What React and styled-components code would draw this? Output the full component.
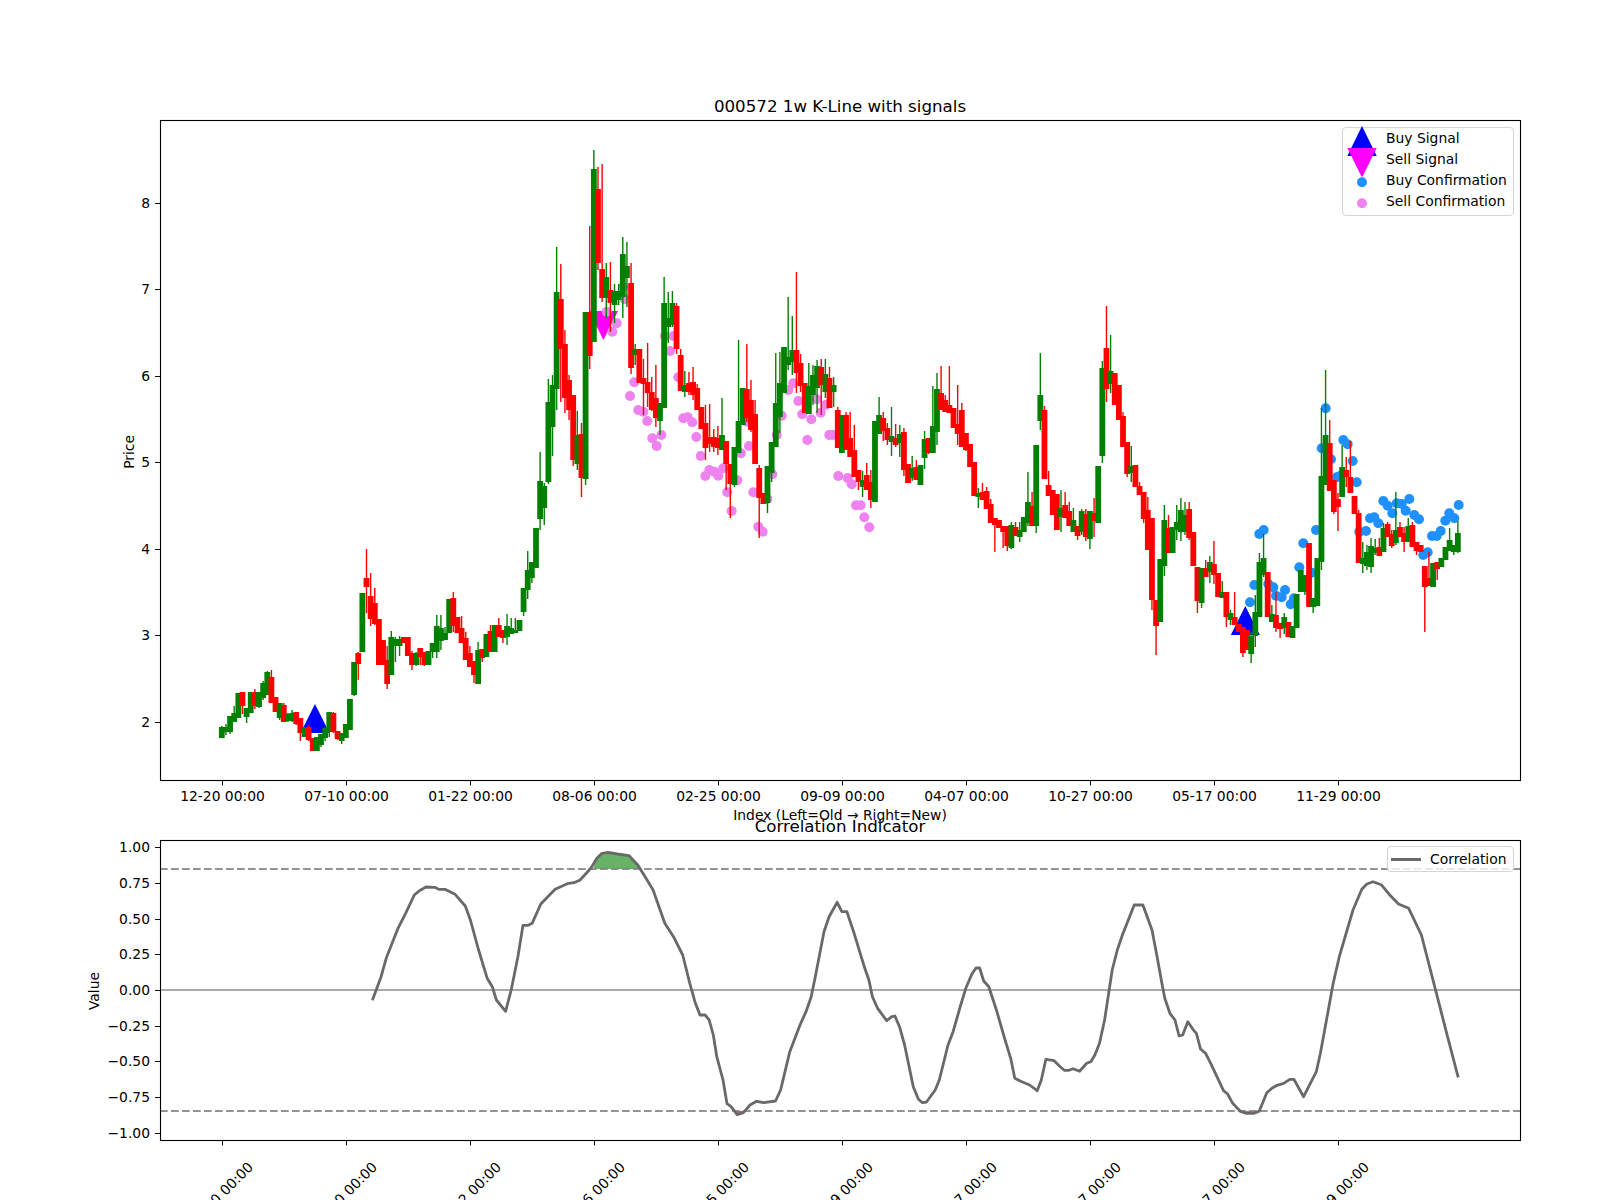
import React from "react";
import styled, { createGlobalStyle } from "styled-components";

// i, colour, body top, body bottom, high, low. y values are figure pixels
const candleRows = `0 g 727 738 726 738
1 g 727 732 724 735
2 g 716 732 716 734
3 g 713 722 706 722
4 g 693 718 693 718
5 r 692 706 692 714
6 g 708 717 708 723
7 g 692 713 692 713
8 r 692 706 689 709
9 g 692 707 692 708
10 g 683 698 681 700
11 g 672 695 671 695
12 r 677 703 670 703
13 r 697 712 697 712
14 g 703 718 703 720
15 r 705 722 703 722
16 g 714 721 713 722
17 g 713 721 710 722
18 r 712 724 712 725
19 r 718 733 718 741
20 g 728 737 727 737
21 r 727 740 725 741
22 r 738 751 738 751
23 g 737 751 737 751
24 g 734 745 734 747
25 g 728 738 727 741
26 g 712 732 712 737
27 r 713 732 712 733
28 r 731 739 731 740
29 g 733 741 733 744
30 g 724 738 724 738
31 g 699 730 699 730
32 g 662 695 662 696
33 r 653 664 652 680
34 g 593 652 593 652
35 r 578 587 549 613
36 r 596 619 573 626
37 r 603 624 588 625
38 r 619 665 619 665
39 r 640 665 640 665
40 r 660 684 646 689
41 g 637 675 631 675
42 g 639 646 637 662
43 g 639 646 636 656
44 r 637 643 637 643
45 r 637 656 637 656
46 r 653 665 651 670
47 g 653 665 652 666
48 r 648 657 648 665
49 r 652 665 652 666
50 g 651 665 651 665
51 g 643 652 643 658
52 g 626 652 615 658
53 g 628 641 615 650
54 g 633 640 627 640
55 g 599 633 599 633
56 r 598 626 592 632
57 r 617 633 617 633
58 r 628 643 616 643
59 r 638 660 632 660
60 r 653 667 646 667
61 r 661 675 661 683
62 g 650 684 642 684
63 r 649 658 649 662
64 g 634 657 634 657
65 r 631 652 625 652
66 g 625 652 625 652
67 r 625 637 618 637
68 r 630 638 630 643
69 g 626 637 614 645
70 g 628 634 618 634
71 g 630 633 618 633
72 g 620 631 620 631
73 g 588 612 588 616
74 g 570 590 551 599
75 g 562 578 562 583
76 g 528 568 528 568
77 g 481 519 452 530
78 g 486 508 483 525
79 g 402 482 379 484
80 g 385 427 375 456
81 g 292 389 247 410
82 r 299 349 264 402
83 r 344 398 330 413
84 r 380 410 375 420
85 r 395 460 395 466
86 g 435 464 411 470
87 r 434 478 423 497
88 g 312 479 312 485
89 r 312 356 226 369
90 g 169 342 150 342
91 r 189 263 167 270
92 r 269 298 164 302
93 g 277 298 263 318
94 r 290 303 262 332
95 g 291 305 284 323
96 g 291 300 284 305
97 g 254 297 237 318
98 g 266 278 242 307
99 r 283 368 263 374
100 g 349 355 344 365
101 r 349 383 349 383
102 r 378 384 359 415
103 r 382 393 343 407
104 r 392 410 377 411
105 r 398 418 365 427
106 g 403 421 403 435
107 g 303 408 277 408
108 g 318 327 292 343
109 g 303 325 291 327
110 r 306 349 303 354
111 r 355 391 349 391
112 g 385 392 371 397
113 r 383 392 372 395
114 r 382 395 367 400
115 r 388 410 384 410
116 r 407 429 407 429
117 r 423 448 405 460
118 r 437 444 404 452
119 r 437 447 429 452
120 r 438 448 426 455
121 g 435 450 398 450
122 r 441 464 441 490
123 r 464 484 464 518
124 g 447 485 447 487
125 g 421 453 340 453
126 g 388 425 388 425
127 r 389 418 344 422
128 r 400 430 380 432
129 r 414 464 400 464
130 r 468 498 465 538
131 r 493 504 493 504
132 g 466 503 466 513
133 g 442 473 442 482
134 g 403 447 353 447
135 g 383 417 352 433
136 g 347 393 347 393
137 g 357 365 297 370
138 g 350 362 316 375
139 r 350 373 272 393
140 r 363 386 354 392
141 r 383 413 383 413
142 g 386 414 363 414
143 g 375 395 365 405
144 g 366 388 360 413
145 r 367 385 359 415
146 g 374 392 359 398
147 r 378 408 367 408
148 g 385 392 377 407
149 r 410 448 407 448
150 g 415 453 415 453
151 r 415 450 412 450
152 r 438 457 412 457
153 r 450 477 425 477
154 r 470 482 470 490
155 g 480 487 471 497
156 r 475 490 463 490
157 r 482 500 470 508
158 g 421 502 421 502
159 g 415 434 397 434
160 r 418 431 412 441
161 r 428 440 423 445
162 g 436 442 407 456
163 r 438 445 424 447
164 g 434 443 425 457
165 r 432 470 428 476
166 r 464 483 464 483
167 g 468 478 456 481
168 r 467 480 460 480
169 g 465 485 465 485
170 g 439 458 431 469
171 r 438 453 438 454
172 g 426 453 386 453
173 g 389 432 373 445
174 r 393 410 366 410
175 r 400 412 395 412
176 r 405 413 366 413
177 r 408 428 408 428
178 r 424 434 385 445
179 r 410 447 403 447
180 r 433 450 433 451
181 r 444 467 444 467
182 r 462 496 462 496
183 g 493 497 488 508
184 r 492 500 483 500
185 r 491 509 487 509
186 r 504 523 499 523
187 r 518 525 518 552
188 r 520 528 520 528
189 r 526 532 526 548
190 r 526 546 526 551
191 g 525 548 522 549
192 r 527 536 522 536
193 g 530 537 522 542
194 g 517 532 517 532
195 g 502 523 472 526
196 r 506 526 492 526
197 g 445 526 445 533
198 g 395 421 353 430
199 r 410 479 406 479
200 r 485 496 471 496
201 r 490 515 490 515
202 r 494 530 494 530
203 g 508 517 490 532
204 r 505 518 492 518
205 r 511 526 502 526
206 g 520 532 508 532
207 r 526 536 526 540
208 g 511 532 509 535
209 r 514 537 509 541
210 g 511 539 511 549
211 r 513 521 498 537
212 g 466 523 466 523
213 g 368 456 361 463
214 r 348 389 306 402
215 g 371 384 335 393
216 r 373 405 373 405
217 r 385 420 385 420
218 r 416 447 412 447
219 r 442 474 442 477
220 g 466 473 446 482
221 r 465 487 465 487
222 r 486 495 482 495
223 r 492 519 492 523
224 r 510 550 497 550
225 r 518 600 518 610
226 r 600 626 600 655
227 g 559 622 559 622
228 g 520 566 505 576
229 r 528 553 515 553
230 g 527 553 527 553
231 g 522 530 505 540
232 g 510 532 498 541
233 g 515 532 502 535
234 r 509 538 502 540
235 r 532 566 532 566
236 r 567 601 567 613
237 g 568 603 568 608
238 r 568 577 560 577
239 g 562 572 556 583
240 r 564 575 541 584
241 r 573 597 573 597
242 g 592 598 581 598
243 r 592 617 592 627
244 g 613 620 610 625
245 r 617 625 592 625
246 r 624 632 624 632
247 r 627 653 627 657
248 r 630 650 630 650
249 g 636 654 632 663
250 g 612 636 595 647
251 g 562 617 553 617
252 g 558 575 534 577
253 r 572 617 572 617
254 g 614 622 605 622
255 r 615 628 592 632
256 r 623 629 623 638
257 g 617 628 613 634
258 r 622 637 622 637
259 g 626 638 626 638
260 g 594 628 594 628
261 g 570 592 570 592
262 g 575 592 575 595
263 r 543 607 543 607
264 g 598 607 598 613
265 g 558 606 558 606
266 g 476 562 408 570
267 g 435 485 370 485
268 r 443 491 420 491
269 r 480 512 480 514
270 r 499 507 493 531
271 g 467 497 445 497
272 r 470 477 457 487
273 r 477 493 441 493
274 r 496 514 496 514
275 r 513 563 510 563
276 g 558 564 542 573
277 g 552 566 545 570
278 g 546 567 538 573
279 g 548 553 539 555
280 r 547 556 538 556
281 g 528 552 523 552
282 r 524 537 522 537
283 r 534 546 530 548
284 g 530 543 492 545
285 r 527 537 522 537
286 r 533 542 527 552
287 g 526 542 518 542
288 r 525 547 522 547
289 r 542 551 542 555
290 r 545 552 545 552
291 r 566 587 566 632
292 r 578 586 552 586
293 g 563 587 563 587
294 r 562 569 562 580
295 g 558 567 558 567
296 g 547 560 547 560
297 g 540 551 528 551
298 g 545 552 545 555
299 g 533 552 521 553`;

const candles = candleRows.split("\n").map((row) => {
  const [i, color, top, bottom, high, low] = row.split(" ");
  return {
    x: 221.8 + 4.134 * Number(i),
    color: color === "g" ? "#008000" : "#ff0000",
    top: Number(top),
    bottom: Number(bottom),
    high: Number(high),
    low: Number(low),
  };
});

const sellDots = [
  [612.3, 331.7], [616.7, 323.3], [606.7, 311.7], [624.7, 299.3], [623, 287], [630, 396], [634.3, 382.3],
  [638.3, 410], [643.3, 411.7], [647.3, 421], [652.3, 438.3], [661.3, 435], [656.7, 446], [670, 351],
  [665, 336], [673.3, 336], [678.3, 377.3], [683.3, 418.3], [687.7, 417.3], [692.3, 422.3], [696.3, 437],
  [700.7, 456], [705.3, 476], [709.3, 470], [714.3, 471.7], [718.3, 475.7], [723.3, 468.3], [727.3, 492.3],
  [731.7, 511], [737.3, 480.3], [741, 453.3], [749, 446], [746.7, 421.7], [753.3, 492.3], [758.3, 526.7],
  [762.7, 531.7], [767.3, 499], [772.3, 474.3], [776.7, 435], [781.7, 415.7], [788.3, 390], [793.3, 383.3],
  [798.3, 401], [802.3, 414.3], [807.3, 440], [811.3, 419.3], [816.7, 399.3], [820.7, 412.7], [825.7, 405],
  [829.3, 435], [832.7, 435], [838.3, 476], [847.7, 478], [851.7, 484.3], [856, 505.3], [860.7, 505.3],
  [864.3, 517.3], [869.3, 527.3],
];

const buyDots = [
  [1325.7, 408.3], [1321.7, 448.3], [1331, 459.3], [1343.3, 440], [1347.7, 444.3], [1352.7, 461],
  [1356.7, 482.3], [1336.7, 477.3], [1340, 476], [1359.3, 531.7], [1366, 531], [1370, 518.3], [1374.3, 517.3],
  [1378.3, 523.3], [1383.3, 501], [1387.7, 505.7], [1392.3, 513.3], [1396.7, 503.3], [1401.7, 504],
  [1405.7, 510.7], [1409.3, 499], [1414.3, 515], [1419, 519.3], [1423.3, 555], [1427.7, 552.3], [1432, 536],
  [1436.7, 536], [1440.7, 531], [1445.3, 520.7], [1449.3, 513.3], [1454.3, 518.3], [1458.7, 505],
  [1259.3, 534], [1263.7, 530], [1250, 602.3], [1254.3, 585], [1268.3, 584], [1273.3, 587.3], [1276, 595.7],
  [1281.7, 597.3], [1285, 590], [1290.7, 604.3], [1294, 598.3], [1299.3, 567.3], [1303.3, 543.3], [1316, 530],
  [1311.7, 572.7],
];

const corrLine = `372.4,1000.3 381.1,976.7 386.2,958.3 398,928.3 405.6,913.3 414.3,895 419.4,890.7 426,887 434.7,887.3
438.8,889.3 444.9,889.3 455.1,894.3 465.3,906 470.4,920 478.6,950 487.2,978.3 492.3,986.7 496.4,1000 505.6,1011.3
511.2,990 517.9,956.7 523,925.3 528.1,925.3 532.1,923.3 540.8,904 555.1,889.3 567.3,883.7 574,882.7 580.1,880
590.8,868.3 596.9,858.3 602,853.3 608.2,852.3 617.3,854 629.1,855.7 637.8,865 645.4,877.3 653.1,890 664.8,923.3
673.5,936.7 682.7,955 689.8,983.3 695.4,1003.3 700,1015 705.1,1015 709.2,1020 713.3,1035 716.8,1056.7 723,1080
727,1103.7 731.1,1106.7 737.2,1114.7 743.4,1112.7 750,1105 756.6,1101.3 763.8,1102.7 775.5,1101 780.6,1090
789.8,1051.7 800,1025 806,1011.7 811.2,996.7 815.3,976.7 824,931.7 829.1,916.7 837.2,902.3 841.8,911.7 846.9,911.7
853.6,931.7 858.7,948.3 864.8,968.3 868.9,980 872.4,996.7 877.6,1008.3 886.7,1020.7 891.8,1016.7 894.9,1016
899.5,1026.7 904.6,1045 913.3,1086.7 918.4,1099.3 922.4,1102.7 926.5,1102 935.2,1090 939.3,1080 948,1045 953.1,1031.7
960.7,1005 965.8,988.3 971.9,974 976,968 979.6,968 983.7,981 988.8,986.7 996.4,1010 1005.1,1040 1010.7,1058.3
1014.8,1078.3 1021.9,1081.7 1029.6,1085 1037.2,1090.7 1041.3,1080 1045.9,1059.3 1054.1,1060.7 1060.2,1066.7
1064.3,1070.3 1068.9,1070.3 1073,1068.7 1079.6,1071.3 1086.7,1063.3 1090.8,1061.7 1094.9,1055 1099.5,1043.3
1104.6,1020 1112.2,970 1117.3,950 1122.4,935 1134.2,905 1142.9,905 1152,930 1157.1,956.7 1162.2,985 1164.8,998.3
1169.9,1013.3 1175,1020 1179.1,1036 1182.7,1035 1187.8,1021.7 1192.9,1029.3 1196.4,1033.3 1200.5,1049 1205.6,1053.3
1210.7,1063.3 1223.5,1090.7 1227.6,1094 1232.7,1103.3 1240.3,1111.3 1246.4,1113.3 1254.1,1113.3 1259.2,1111.3
1266.8,1092.7 1271.9,1088.3 1277,1085.3 1283.7,1083.3 1289.8,1079.3 1293.9,1079.3 1303.6,1096.7 1316.3,1071.7
1320.4,1053.3 1333.2,983.3 1339.3,956.7 1353,910 1361.8,889.3 1366.9,884 1373,881.7 1381.2,884.7 1389.8,895
1398.5,904 1408.7,908.3 1421.4,935 1434.7,986.7 1445.4,1028.3 1458.2,1077.3`;

const dateLabels = ["12-20", "07-10", "01-22", "08-06", "02-25", "09-09", "04-07", "10-27", "05-17", "11-29"];
const xTicks = dateLabels.map((date, n) => ({ x: 222.5 + 124 * n, label: `${date} 00:00` }));

const priceTicks = [8, 7, 6, 5, 4, 3, 2].map((v) => ({ y: 202.6 + (8 - v) * 86.5, label: String(v) }));
const valueTicks = [1, 0.75, 0.5, 0.25, 0, -0.25, -0.5, -0.75, -1].map((v) => ({
  y: 990 - v * 142.6,
  label: (v < 0 ? "\u2212" : "") + Math.abs(v).toFixed(2),
}));

function Axes({ x, y, height, yTicks, rotated }) {
  const bottom = y + height;
  return (
    <>
      <rect x={x + 0.5} y={y + 0.5} width="1360" height={height} fill="none" stroke="#000" strokeWidth="1.1" />
      {yTicks.map((t) => (
        <g key={t.label}>
          <line
            x1={x - 4.9}
            x2={x}
            y1={Math.round(t.y) + 0.5}
            y2={Math.round(t.y) + 0.5}
            stroke="#000"
            strokeWidth="1"
          />
          <TickText x={x - 10} y={t.y + 5} textAnchor="end">
            {t.label}
          </TickText>
        </g>
      ))}
      {xTicks.map((t) => (
        <g key={t.label}>
          <line x1={t.x} x2={t.x} y1={bottom} y2={bottom + 5.4} stroke="#000" strokeWidth="1" />
          {rotated ? (
            <TickText
              x={t.x + 31.5}
              y={bottom + 28}
              textAnchor="end"
              transform={`rotate(-45 ${t.x + 31.5} ${bottom + 28})`}
            >
              {t.label}
            </TickText>
          ) : (
            <TickText x={t.x} y={bottom + 21} textAnchor="middle">
              {t.label}
            </TickText>
          )}
        </g>
      ))}
    </>
  );
}

function PriceChart() {
  return (
    <Chart viewBox="160 120 1360 660">
      <polygon points="315,704 300.5,733 329.5,733" fill="#0000ff" />
      <polygon points="1245.3,606 1230.8,635 1259.8,635" fill="#0000ff" />
      <polygon points="589,311 618,311 603.4,340" fill="#ff00ff" />
      {sellDots.map(([cx, cy]) => (
        <circle key={`${cx}-${cy}`} cx={cx} cy={cy} r="5" fill="#ee82ee" />
      ))}
      {buyDots.map(([cx, cy]) => (
        <circle key={`${cx}-${cy}`} cx={cx} cy={cy} r="5" fill="#1e90ff" />
      ))}
      {candles.map((c) => (
        <g key={c.x} stroke={c.color}>
          <line x1={c.x} x2={c.x} y1={c.high} y2={c.low} strokeWidth="1.4" />
          <line x1={c.x} x2={c.x} y1={c.top} y2={c.bottom} strokeWidth="5.8" />
        </g>
      ))}
      <Axes x={160} y={120} height={660} yTicks={priceTicks} />
    </Chart>
  );
}

function CorrelationChart() {
  return (
    <Chart viewBox="160 840 1360 300">
      <line x1="160" x2="1520" y1="990" y2="990" stroke="#aaa" strokeWidth="2.1" />
      <polygon
        points="593,869 596.9,858.3 602,853.3 608.2,852.3 617.3,854 629.1,855.7 637.8,865 640,869"
        fill="#008000"
        fillOpacity="0.6"
      />
      <polygon points="734.5,1111 737.2,1114.7 743.4,1112.7 745,1111" fill="#dc143c" fillOpacity="0.7" />
      <polygon points="1240.3,1111 1246.4,1113.3 1254.1,1113.3 1259.2,1111" fill="#dc143c" fillOpacity="0.7" />
      <line x1="160" x2="1520" y1="869" y2="869" stroke="#808080" strokeOpacity="0.85" strokeWidth="2.1" strokeDasharray="7.7 3.3" />
      <line x1="160" x2="1520" y1="1111" y2="1111" stroke="#808080" strokeOpacity="0.85" strokeWidth="2.1" strokeDasharray="7.7 3.3" />
      <polyline points={corrLine} fill="none" stroke="#696969" strokeWidth="2.8" strokeLinejoin="round" />
      <Axes x={160} y={840} height={300} yTicks={valueTicks} rotated />
    </Chart>
  );
}

function App() {
  return (
    <Figure>
      <GlobalStyle />
      <Title $row={1}>000572 1w K-Line with signals</Title>
      <AxisTitle $row={2} $offset={23}>Price</AxisTitle>
      <Plot $row={2}>
        <PriceChart />
        <Legend>
          <LegendRow>
            <Marker viewBox="0 0 38 21">
              <polygon points="19,-2 4.3,28 33.7,28" fill="#0000ff" />
            </Marker>
            <LegendText>Buy Signal</LegendText>
          </LegendRow>
          <LegendRow>
            <Marker viewBox="0 0 38 21">
              <polygon points="4.3,-1 33.7,-1 19,28.5" fill="#ff00ff" />
            </Marker>
            <LegendText>Sell Signal</LegendText>
          </LegendRow>
          <LegendRow>
            <Marker viewBox="0 0 38 21">
              <circle cx="19" cy="12.2" r="5" fill="#1e90ff" />
            </Marker>
            <LegendText>Buy Confirmation</LegendText>
          </LegendRow>
          <LegendRow>
            <Marker viewBox="0 0 38 21">
              <circle cx="19" cy="12.2" r="5" fill="#ee82ee" />
            </Marker>
            <LegendText>Sell Confirmation</LegendText>
          </LegendRow>
        </Legend>
      </Plot>
      <XLabel>Index (Left=Old → Right=New)</XLabel>
      <Title $row={3}>Correlation Indicator</Title>
      <AxisTitle $row={4} $offset={58}>Value</AxisTitle>
      <Plot $row={4}>
        <CorrelationChart />
        <LineLegend>
          <LegendLine />
          Correlation
        </LineLegend>
      </Plot>
    </Figure>
  );
}

const GlobalStyle = createGlobalStyle`
  html, body {
    margin: 0;
    background: #fff;
  }
`;

const Figure = styled.div`
  display: grid;
  grid-template-columns: 160px 1360px;
  grid-template-rows: 120px 660px 60px 300px 60px;
  width: 1600px;
  height: 1200px;
  overflow: hidden;
  background: #fff;
  color: #000;
  font-family: "DejaVu Sans", sans-serif;
  font-size: 13.89px;
`;

const Title = styled.div`
  grid-column: 2;
  grid-row: ${(p) => p.$row};
  align-self: end;
  padding-bottom: 3.5px;
  font-size: 16.67px;
  line-height: 20px;
  text-align: center;
`;

const AxisTitle = styled.div`
  grid-column: 1;
  grid-row: ${(p) => p.$row};
  align-self: center;
  justify-self: end;
  margin-top: 3px;
  margin-right: ${(p) => p.$offset}px;
  writing-mode: vertical-rl;
  transform: rotate(180deg);
  line-height: 16px;
`;

const XLabel = styled.div`
  grid-column: 2;
  grid-row: 3;
  align-self: start;
  margin-top: 27px;
  line-height: 16px;
  text-align: center;
`;

const Plot = styled.div`
  position: relative;
  grid-column: 2;
  grid-row: ${(p) => p.$row};
`;

const Chart = styled.svg`
  display: block;
  width: 100%;
  height: 100%;
  overflow: visible;
`;

const TickText = styled.text`
  font-family: "DejaVu Sans", sans-serif;
  font-size: 13.89px;
  fill: #000;
`;

const Legend = styled.div`
  position: absolute;
  top: 7px;
  right: 6px;
  box-sizing: border-box;
  width: 172px;
  height: 89px;
  padding: 0 0 2px;
  border: 1px solid #d5d5d5;
  border-radius: 4px;
  background: rgba(255, 255, 255, 0.8);
`;

const LegendRow = styled.div`
  display: flex;
  align-items: center;
  gap: 5px;
  height: 21px;
  white-space: nowrap;
`;

const LegendText = styled.span`
  margin-bottom: 2px;
`;

const Marker = styled.svg`
  flex: none;
  width: 38px;
  height: 21px;
  overflow: visible;
`;

const LineLegend = styled.div`
  position: absolute;
  top: 6px;
  right: 6px;
  box-sizing: border-box;
  display: flex;
  align-items: center;
  gap: 9px;
  width: 127px;
  height: 26px;
  padding-left: 3px;
  border: 1px solid #d5d5d5;
  border-radius: 4px;
  background: rgba(255, 255, 255, 0.8);
  white-space: nowrap;
`;

const LegendLine = styled.span`
  flex: none;
  width: 30px;
  height: 3px;
  background: #696969;
`;

export default App;
